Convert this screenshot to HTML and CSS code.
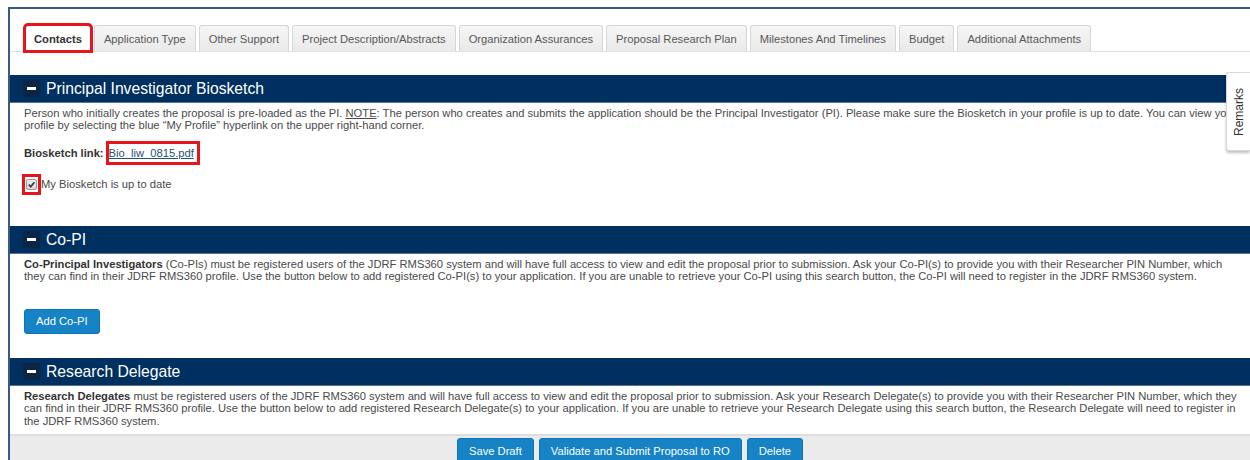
FILE: index.html
```html
<!DOCTYPE html>
<html lang="en">
<head>
<meta charset="utf-8">
<title>Proposal - Contacts</title>
<link rel="stylesheet" href="styles.css">
</head>
<body>
<div class="frame">
  <ul class="tabs">
    <li class="tab active">Contacts</li>
    <li class="tab">Application Type</li>
    <li class="tab">Other Support</li>
    <li class="tab">Project Description/Abstracts</li>
    <li class="tab">Organization Assurances</li>
    <li class="tab">Proposal Research Plan</li>
    <li class="tab">Milestones And Timelines</li>
    <li class="tab">Budget</li>
    <li class="tab">Additional Attachments</li>
  </ul>

  <section class="panel pi">
    <h2 class="panel-head"><span class="toggle"></span>Principal Investigator Biosketch</h2>
    <div class="panel-body">
      <p class="text">Person who initially creates the proposal is pre-loaded as the PI. <u>NOTE</u>: The person who creates and submits the application should be the Principal Investigator (PI). Please make sure the Biosketch in your profile is up to date. You can view your profile by selecting the blue “My Profile” hyperlink on the upper right-hand corner.</p>
      <p class="link-row"><b>Biosketch link:</b><a class="file-link" href="#">Bio_liw_0815.pdf</a></p>
      <label class="check-row"><span class="check-frame"><span class="checkbox"><svg viewBox="0 0 10 10" width="9" height="9"><path d="M2 5.2 L4.1 7.4 L8.2 2.4" fill="none" stroke="#333" stroke-width="1.8"/></svg></span></span>My Biosketch is up to date</label>
    </div>
  </section>

  <section class="panel copi">
    <h2 class="panel-head"><span class="toggle"></span>Co-PI</h2>
    <div class="panel-body">
      <p class="text"><b>Co-Principal Investigators</b> (Co-PIs) must be registered users of the JDRF RMS360 system and will have full access to view and edit the proposal prior to submission. Ask your Co-PI(s) to provide you with their Researcher PIN Number, which they can find in their JDRF RMS360 profile. Use the button below to add registered Co-PI(s) to your application. If you are unable to retrieve your Co-PI using this search button, the Co-PI will need to register in the JDRF RMS360 system.</p>
      <button class="btn add-btn">Add Co-PI</button>
    </div>
  </section>

  <section class="panel delegate">
    <h2 class="panel-head"><span class="toggle"></span>Research Delegate</h2>
    <div class="panel-body">
      <p class="text"><b>Research Delegates</b> must be registered users of the JDRF RMS360 system and will have full access to view and edit the proposal prior to submission. Ask your Research Delegate(s) to provide you with their Researcher PIN Number, which they can find in their JDRF RMS360 profile. Use the button below to add registered Research Delegate(s) to your application. If you are unable to retrieve your Research Delegate using this search button, the Research Delegate will need to register in the JDRF RMS360 system.</p>
    </div>
  </section>

  <div class="actions">
    <button class="btn">Save Draft</button>
    <button class="btn">Validate and Submit Proposal to RO</button>
    <button class="btn">Delete</button>
  </div>

  <div class="remarks"><span>Remarks</span></div>
</div>
</body>
</html>
```

FILE: styles.css
```css
* { box-sizing: border-box; }

html, body {
  margin: 0;
  padding: 0;
  background: #fff;
  font-family: "Liberation Sans", Arial, sans-serif;
  font-size: 11.2px;
  color: #4a4a4a;
  overflow: hidden;
}

.frame {
  position: relative;
  margin: 7px 0 0 8px;
  border-top: 2px solid #3a5a84;
  border-left: 2px solid #3a5a84;
  height: 460px;
}

/* tab strip */
.tabs {
  list-style: none;
  margin: 0;
  padding: 16px 0 0 15px;
  display: flex;
  gap: 3px;
  border-bottom: 1px solid #e2e2e2;
}

.tab {
  height: 26px;
  padding: 0 9px;
  display: flex;
  align-items: center;
  background: linear-gradient(#f6f6f6, #e9e9e9);
  border: 1px solid #d6d6d6;
  border-bottom: none;
  border-radius: 3px 3px 0 0;
  color: #585858;
  font-size: 11.2px;
}

.tab.active {
  background: #fff;
  color: #333;
  font-weight: bold;
  border-top: 1px solid #3a6ea5;
  padding: 0 8px;
  outline: 3px solid #e8141c;
  outline-offset: -1px;
}

/* collapsible panels */
.pi { margin-top: 23px; }

.panel-head {
  margin: 0;
  height: 28px;
  background: #00305f;
  color: #fff;
  font-weight: normal;
  font-size: 15.7px;
  display: flex;
  align-items: center;
  padding-left: 13px;
  border-bottom: 1px solid #5a7594;
}

.toggle {
  width: 17px;
  height: 17px;
  background: #0c2544;
  border-radius: 3px;
  margin-right: 6px;
  position: relative;
}

.toggle::after {
  content: "";
  position: absolute;
  left: 4px;
  right: 4px;
  top: 7px;
  height: 3px;
  background: #fff;
}

.panel-body {
  padding: 4px 6px 0 14px;
}

.text {
  margin: 0;
  line-height: 12.4px;
}

.text b { color: #333; }

.link-row {
  margin: 9px 0 0 0;
  height: 25px;
  display: flex;
  align-items: center;
}

.link-row b { color: #333; }

/* red highlight frames */
.file-link {
  color: #23527c;
  margin-left: 2px;
  padding: 2px 3px 2px 0;
  line-height: 14px;
  border: 3px solid #e8141c;
}

.check-row {
  display: flex;
  align-items: center;
  margin: 8px 0 0 -2px;
  height: 21px;
}

.check-frame {
  width: 19px;
  height: 21px;
  border: 3px solid #e8141c;
  display: flex;
  align-items: center;
  justify-content: center;
}

.checkbox {
  width: 11px;
  height: 11px;
  background: linear-gradient(#eee, #d8d8d8);
  border: 1px solid #9a9a9a;
  border-radius: 2px;
  display: flex;
  align-items: center;
  justify-content: center;
}

.checkbox svg { display: block; }

.pi .panel-body { height: 123px; }
.copi .panel-body { height: 104px; }
.delegate .panel-body { height: 48px; }

/* buttons */
.btn {
  font-family: "Liberation Sans", Arial, sans-serif;
  font-size: 11.2px;
  color: #fff;
  background: #1583c6;
  border: 1px solid #0f76b6;
  border-radius: 3px;
  height: 25px;
  padding: 0 11px;
  cursor: pointer;
}

.add-btn { margin-top: 26px; }

.actions {
  background: #ebebeb;
  border-top: 2px solid #dedede;
  display: flex;
  justify-content: center;
  gap: 5px;
  padding: 2px 0 0 0;
  height: 40px;
}

.actions .btn { height: 26px; }

/* side remarks tab */
.remarks {
  position: absolute;
  right: 0;
  top: 63px;
  width: 24px;
  height: 79px;
  background: #fff;
  border: 1px solid #d8d8d8;
  border-right: none;
  border-radius: 3px 0 0 3px;
  box-shadow: 0 2px 3px rgba(0,0,0,0.25);
  display: flex;
  align-items: center;
  justify-content: center;
}

.remarks span {
  transform: rotate(-90deg);
  font-size: 12px;
  color: #333;
  white-space: nowrap;
}
```
